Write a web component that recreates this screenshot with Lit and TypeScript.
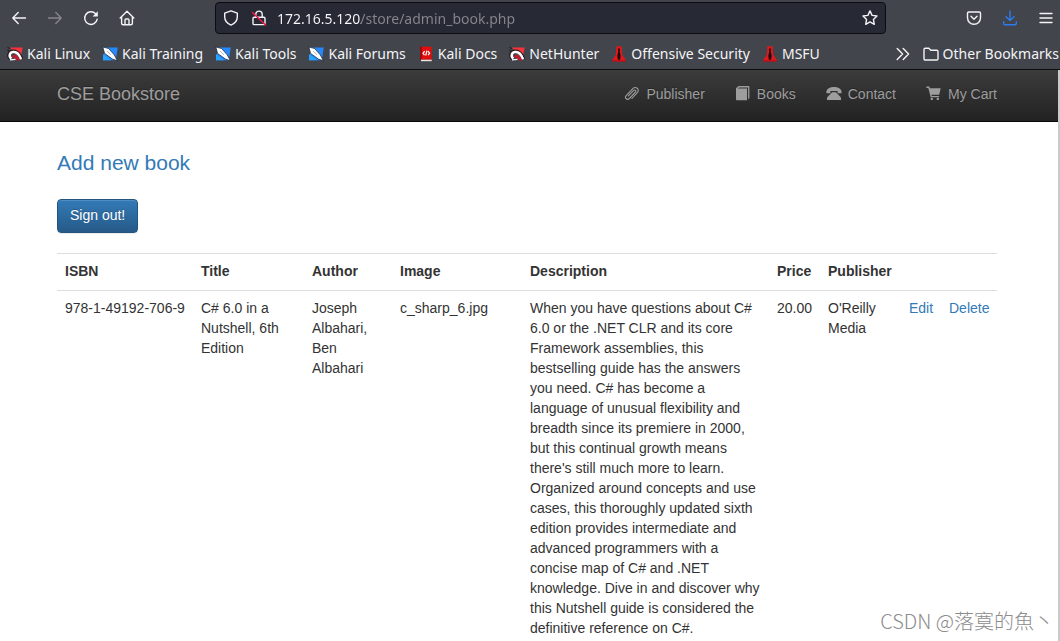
import { LitElement, html, css, svg } from "lit";
import { customElement } from "lit/decorators.js";

const stroke = (d: unknown, cls = "") => html`
  <svg class="icon ${cls}" viewBox="0 0 16 16" width="16" height="16" fill="none" stroke="currentColor"
    stroke-width="1.4" stroke-linecap="round" stroke-linejoin="round" aria-hidden="true">${d}</svg>`;

const icons = {
  back: stroke(svg`<path d="M14.5 8H1.8M7.2 2.6L1.8 8l5.4 5.4"/>`),
  forward: stroke(svg`<path d="M1.5 8h12.7M8.8 2.6L14.2 8l-5.4 5.4"/>`),
  reload: stroke(svg`<path d="M14.2 9.2A6.3 6.3 0 1 1 12.6 3.8"/><path d="M14.8 1.2v5.2H9.6z" fill="currentColor" stroke="none"/>`),
  home: stroke(svg`<path d="M1.2 8L8 1.3 14.8 8M2.6 7v6.2c0 .9.6 1.5 1.5 1.5h7.8c.9 0 1.5-.6 1.5-1.5V7M6 14.5V10c0-.6.4-1 1-1h2c.6 0 1 .4 1 1v4.5"/>`),
  shield: stroke(svg`<path d="M8 .9l6.3 2.2v3.7c0 3.6-2.3 6.7-6.3 8.3C4 13.5 1.7 10.400 1.7 6.8V3.1z"/>`),
  lock: stroke(svg`<path d="M4.8 7V4.3a3.2 3.2 0 0 1 6.4 0V7M3.2 7.2h9.6c.7 0 1.2.5 1.2 1.2v5c0 .7-.5 1.2-1.2 1.2H3.2c-.7 0-1.2-.5-1.2-1.2v-5c0-.7.5-1.2 1.2-1.2z"/><path d="M1.5 2.5l13 12.5" stroke="#f01846" stroke-width="1.5"/>`),
  star: stroke(svg`<path d="M8 .9l2.1 4.500 4.9.6-3.600 3.400.9 4.900L8 11.900l-4.300 2.400.9-4.900L1 6l4.900-.6z"/>`),
  pocket: stroke(svg`<path d="M2.700 2h10.600c.7 0 1.200.5 1.200 1.200v4.600a6.500 6.500 0 0 1-13 0V3.200C1.500 2.500 2 2 2.700 2zM5 6.300l3 2.900 3-2.900"/>`),
  download: stroke(svg`<path d="M8 1v9.500M4 6.700l4 3.900 4-3.900M1.700 11.700v1.700c0 .8.6 1.400 1.400 1.400h9.800c.8 0 1.400-.6 1.400-1.400v-1.700"/>`, "blue"),
  menu: stroke(svg`<path d="M2 3.500h12M2 8h12M2 12.500h12"/>`),
  more: stroke(svg`<path d="M2.200 2.500L7.600 8l-5.400 5.500M8.200 2.500L13.600 8l-5.400 5.500"/>`),
  folder: stroke(svg`<path d="M2.200 2.200h3.600l2 2.100h6c.7 0 1.200.5 1.200 1.200v7.300c0 .7-.5 1.200-1.200 1.200H2.200c-.7 0-1.200-.5-1.200-1.200V3.400c0-.7.5-1.200 1.200-1.200z"/>`),
};

const favicon = (d: unknown) => html`<svg class="icon" viewBox="0 0 16 16" width="16" height="16" aria-hidden="true">${d}</svg>`;

const dragon = favicon(svg`
  <path d="M3 1.600h12.700l-2.400 11.800L8 8z" fill="#f5333c"/>
  <path d="M.6 1.500l2.300 1M.3 4.300l1.600.4" stroke="#161618" stroke-width="1"/>
  <path d="M3.600 12.600C.6 9.800 2 5.400 6.600 5.500c3.800.1 6.200 2.900 8 8" fill="none" stroke="#2a1a1f" stroke-width="3.800"/>
  <path d="M4.400 12.600C1.300 10.300 2.600 5.900 6.900 6.100c3.300.1 5.600 2.900 7.200 7.300" fill="none" stroke="#fff" stroke-width="2.500"/>
  <path d="M4.900 10.800c.6-2.300 3.300-2.400 5.200-.4l3.300 3.800H9.400L7.600 12z" fill="#c9182f"/>
  <path d="M3 13.800l5.500-.5" stroke="#fff" stroke-width="1.300"/>`);
const knife = favicon(svg`
  <path d="M3 1.500h12.800l-2 12.700H1z" fill="#2588fb"/>
  <path d="M1 8l8 6.200H1z" fill="#27a4ff"/>
  <path d="M.8 1l5.800 1.500 5.600 6.300 3.200 6-5-1.800L2.600 7.400z" fill="#fff" stroke="#17202c" stroke-width=".7"/>
  <path d="M5 5l4 3.800" stroke="#7d8a96" stroke-width=".6"/>`);
const manual = favicon(svg`
  <path d="M2.200.7h11.500v13H2.200z" fill="#df0d0d"/>
  <path d="M2.200.7h1.500v13H2.200z" fill="#8f0808"/>
  <path d="M3 13.700h10.700v1.500H3z" fill="#eee5e3"/>
  <path d="M6.700 5.200L5 7.300l1.500 1.900M10 5.200l1.600 2-1.500 2M9 4.700L7.700 9.500" fill="none" stroke="#fff" stroke-width="1.200"/>`);
const tower = favicon(svg`
  <path d="M5.300.3h5.400l.4 8.200 3.500 5.200v1.800H1.400v-1.800l3.500-5.200z" fill="#e0181c"/>
  <path d="M8 1.600l1 1.900-.3 2.100 1 4.100-.6 4H6.900l-.6-4 1-4.100L7 3.500z" fill="#1d0d10"/>
  <path d="M1.400 14.500h13.200v1H1.400z" fill="#a50d12"/>`);

const bookmarks = [
  { label: "Kali Linux", icon: dragon },
  { label: "Kali Training", icon: knife },
  { label: "Kali Tools", icon: knife },
  { label: "Kali Forums", icon: knife },
  { label: "Kali Docs", icon: manual },
  { label: "NetHunter", icon: dragon },
  { label: "Offensive Security", icon: tower },
  { label: "MSFU", icon: tower },
];

const glyph = (d: unknown) => html`<svg class="glyph" viewBox="0 0 16 16" width="16" height="16" fill="currentColor" aria-hidden="true">${d}</svg>`;

const navItems = [
  { label: "Publisher", icon: glyph(svg`<path d="M4.400 9.800l5-5.200c1.400-1.400 3.200.2 2 1.600l-6 6.300c-2.200 2.200-5.300-.5-3.200-2.900l6.600-7c2.800-2.700 7.300.4 4.700 3.800l-5.600 6.100" fill="none" stroke="currentColor" stroke-width="1.100" stroke-linecap="round"/>`) },
  { label: "Books", icon: glyph(svg`<path d="M3.500 0h10.200c.4 0 .7.300.7.7v11.500l-1.300 1.100V1.600H3.700l-.7.8h9v11.800H2c-.6 0-1-.4-1-1V2.200z"/>`) },
  { label: "Contact", icon: glyph(svg`<path d="M.4 6C.5 2.900 4 1.100 8 1.100S15.500 2.900 15.600 6v1.300h-4V5H4.400v2.300h-4z"/><path d="M6.100 6.300h3.800l4.400 4.500c.5.500.7 1 .7 1.700v1.600H1v-1.600c0-.7.2-1.200.7-1.700z"/>`) },
  { label: "My Cart", icon: glyph(svg`<path d="M.4.500h2.900l.6 1.700h10.800l-1.500 6.500H5.500l.3 1.300h7.300v1.300H4.700L2.300 1.900H.4z"/><circle cx="5.800" cy="12.900" r="1.200"/><circle cx="11.800" cy="12.900" r="1.200"/>`) },
];

const books = [
  {
    isbn: "978-1-49192-706-9",
    title: "C# 6.0 in a Nutshell, 6th Edition",
    author: "Joseph Albahari, Ben Albahari",
    image: "c_sharp_6.jpg",
    description:
      "When you have questions about C# 6.0 or the .NET CLR and its core Framework assemblies, this bestselling guide has the answers you need. C# has become a language of unusual flexibility and breadth since its premiere in 2000, but this continual growth means there's still much more to learn. Organized around concepts and use cases, this thoroughly updated sixth edition provides intermediate and advanced programmers with a concise map of C# and .NET knowledge. Dive in and discover why this Nutshell guide is considered the definitive reference on C#.",
    price: "20.00",
    publisher: "O'Reilly Media",
  },
];

@customElement("browser-chrome")
class BrowserChrome extends LitElement {
  static styles = css`
    :host { display: block; background: #42454c; color: #f4f4f6; border-bottom: 1px solid #0c0c0d; font-family: "Noto Sans", sans-serif; }
    * { box-sizing: border-box; }
    .icon { display: block; flex: none; }
    .blue { color: #2b7bf3; }
    button { border: 0; padding: 0; background: none; color: inherit; font: inherit; }
    button:disabled { color: #85878c; }
    .toolbar { display: grid; grid-template-columns: 208px 1fr 168px; align-items: center; padding: 2px 0; height: 36px; }
    .history { display: flex; gap: 20px; padding-left: 11px; }
    .actions { display: flex; gap: 20px; justify-content: flex-end; padding-right: 6px; }
    .address { display: flex; align-items: center; gap: 12px; height: 32px; margin: 0 6px 0 7px; padding: 0 7px; background: #272935; border: 1px solid #0c0c10; border-radius: 4px; }
    .address input {
      flex: 1; min-width: 0; height: 28px; padding: 0; margin-left: -2px; border: 0; outline: 0;
      font: 14px "Noto Sans", sans-serif; color: transparent; caret-color: #fbfbfe;
      background: linear-gradient(90deg, #fbfbfe 84px, #85868e 84px) text;
    }
    .bookmarks { display: flex; align-items: center; gap: 12px; height: 33px; padding: 2px 1px 0 7px; font-size: 14px; white-space: nowrap; }
    .bookmarks a, .other { display: flex; align-items: center; gap: 4px; color: inherit; text-decoration: none; }
    .more { margin-left: auto; }
  `;
  render() {
    return html`
      <div class="toolbar">
        <div class="history">
          <button aria-label="Back">${icons.back}</button>
          <button aria-label="Forward" disabled>${icons.forward}</button>
          <button aria-label="Reload">${icons.reload}</button>
          <button aria-label="Home">${icons.home}</button>
        </div>
        <div class="address">
          ${icons.shield}${icons.lock}
          <input type="text" aria-label="Address" value="172.16.5.120/store/admin_book.php" />
          <button aria-label="Bookmark this page">${icons.star}</button>
        </div>
        <div class="actions">
          <button aria-label="Save to Pocket">${icons.pocket}</button>
          <button aria-label="Downloads">${icons.download}</button>
          <button aria-label="Menu">${icons.menu}</button>
        </div>
      </div>
      <nav class="bookmarks">
        ${bookmarks.map((b) => html`<a href="#">${b.icon}<span>${b.label}</span></a>`)}
        <button class="more" aria-label="More bookmarks">${icons.more}</button>
        <button class="other">${icons.folder}<span>Other Bookmarks</span></button>
      </nav>`;
  }
}

@customElement("book-admin")
class BookAdmin extends LitElement {
  static styles = css`
    :host { display: block; font: 14px/20px "Liberation Sans", Arial, sans-serif; color: #333; }
    * { box-sizing: border-box; }
    a { color: #337ab7; text-decoration: none; }
    .container { max-width: 940px; margin: 0 auto; }
    .navbar { background: linear-gradient(#3c3c3c, #222); border-bottom: 1px solid #080808; padding-right: 4px; }
    .navbar .container { display: flex; justify-content: space-between; align-items: center; height: 51px; padding-bottom: 3px; }
    .navbar a { color: #9d9d9d; text-shadow: 0 -1px 0 rgba(0, 0, 0, 0.25); }
    .brand { font-size: 18px; }
    .links { display: flex; gap: 30px; margin: 0; padding: 0; list-style: none; }
    .links a { display: flex; align-items: center; gap: 6px; }
    .glyph { display: block; }
    main { padding: 26px 4px 0 0; }
    .lead { margin: 0 0 21px; font-size: 21px; line-height: 30px; }
    .signout {
      display: block; height: 34px; padding: 0 12px 2px; border: 1px solid #245580; border-radius: 4px;
      background: linear-gradient(#337ab7, #265a88); color: #fff; font: inherit;
      text-shadow: 0 -1px 0 rgba(0, 0, 0, 0.2);
      box-shadow: inset 0 1px 0 rgba(255, 255, 255, 0.15), 0 1px 1px rgba(0, 0, 0, 0.075);
    }
    table { width: 100%; margin: 20px 0; table-layout: fixed; border-collapse: separate; border-spacing: 0; }
    th, td { padding: 7px 8px 9px; border-top: 1px solid #ddd; text-align: left; vertical-align: top; }
    .isbn { width: 136px; }
    .title { width: 111px; }
    .author { width: 88px; }
    .image { width: 130px; }
    .price { width: 51px; }
    .publisher { width: 81px; }
    .edit { width: 40px; }
    .delete { width: 56px; }
  `;
  render() {
    return html`
      <nav class="navbar">
        <div class="container">
          <a class="brand" href="#">CSE Bookstore</a>
          <ul class="links">
            ${navItems.map((n) => html`<li><a href="#">${n.icon}<span>${n.label}</span></a></li>`)}
          </ul>
        </div>
      </nav>
      <main>
        <div class="container">
          <p class="lead"><a href="#">Add new book</a></p>
          <button class="signout">Sign out!</button>
          <table>
            <thead>
              <tr>
                <th class="isbn">ISBN</th><th class="title">Title</th><th class="author">Author</th>
                <th class="image">Image</th><th>Description</th><th class="price">Price</th>
                <th class="publisher">Publisher</th><th class="edit"></th><th class="delete"></th>
              </tr>
            </thead>
            <tbody>
              ${books.map((b) => html`<tr>
                <td>${b.isbn}</td><td>${b.title}</td><td>${b.author}</td><td>${b.image}</td>
                <td>${b.description}</td><td>${b.price}</td><td>${b.publisher}</td>
                <td><a href="#">Edit</a></td><td><a href="#">Delete</a></td>
              </tr>`)}
            </tbody>
          </table>
        </div>
      </main>`;
  }
}

@customElement("app-root")
class AppRoot extends LitElement {
  static styles = css`
    :host { display: flex; flex-direction: column; position: relative; height: 100vh; overflow: hidden; background: #fff; }
    browser-chrome { flex: none; }
    book-admin { flex: 1; min-height: 0; overflow: hidden; border-right: 2px solid #c9c9c9; }
    .watermark { position: absolute; right: 6px; bottom: 6px; font: 300 20px/28px "Noto Sans CJK SC", sans-serif; color: #8c8c8c; }
  `;
  render() {
    return html`<browser-chrome></browser-chrome><book-admin></book-admin><span class="watermark">CSDN @落寞的魚丶</span>`;
  }
}
